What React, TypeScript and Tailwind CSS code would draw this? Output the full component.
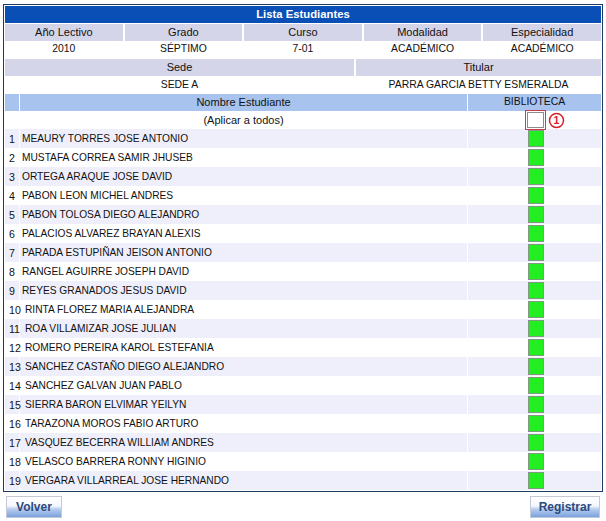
import React from 'react';

const students = [
  'MEAURY TORRES JOSE ANTONIO',
  'MUSTAFA CORREA SAMIR JHUSEB',
  'ORTEGA ARAQUE JOSE DAVID',
  'PABON LEON MICHEL ANDRES',
  'PABON TOLOSA DIEGO ALEJANDRO',
  'PALACIOS ALVAREZ BRAYAN ALEXIS',
  'PARADA ESTUPIÑAN JEISON ANTONIO',
  'RANGEL AGUIRRE JOSEPH DAVID',
  'REYES GRANADOS JESUS DAVID',
  'RINTA FLOREZ MARIA ALEJANDRA',
  'ROA VILLAMIZAR JOSE JULIAN',
  'ROMERO PEREIRA KAROL ESTEFANIA',
  'SANCHEZ CASTAÑO DIEGO ALEJANDRO',
  'SANCHEZ GALVAN JUAN PABLO',
  'SIERRA BARON ELVIMAR YEILYN',
  'TARAZONA MOROS FABIO ARTURO',
  'VASQUEZ BECERRA WILLIAM ANDRES',
  'VELASCO BARRERA RONNY HIGINIO',
  'VERGARA VILLARREAL JOSE HERNANDO',
];

const headCell = 'flex-1 h-[17px] flex items-center justify-center bg-[#d5d5e9]';
const valCell = 'flex-1 h-[17px] flex items-center justify-center bg-white text-[10.4px]';

function Button({ label, width }: { label: string; width: string }) {
  return (
    <button
      className={`${width} h-[22px] border border-[#c3cad6] bg-[linear-gradient(to_bottom,#ffffff_0%,#f4f7fc_45%,#b9cdee_60%,#7aa2de_100%)] text-[#2c4a7c] font-bold text-[12px] flex items-center justify-center`}
    >
      {label}
    </button>
  );
}

export default function App() {
  return (
    <div className="w-[606px] h-[521px] bg-white font-['Liberation_Sans',Arial,sans-serif] text-[11px] text-[#111] leading-none">
      <div className="pt-[4px] px-[3px]">
        <div className="border border-[#1d3a60] p-[1px] flex flex-col">
          {/* title */}
          <div className="h-[17px] bg-[#0a4fb6] text-white font-bold text-[11.3px] flex items-center justify-center">
            Lista Estudiantes
          </div>

          <div className="mt-[1px] flex gap-[2px]">
            <div className={headCell}>Año Lectivo</div>
            <div className={headCell}>Grado</div>
            <div className={headCell}>Curso</div>
            <div className={headCell}>Modalidad</div>
            <div className={headCell}>Especialidad</div>
          </div>
          <div className="flex gap-[2px]">
            <div className={valCell}>2010</div>
            <div className={valCell}>SÉPTIMO</div>
            <div className={valCell}>7-01</div>
            <div className={valCell}>ACADÉMICO</div>
            <div className={valCell}>ACADÉMICO</div>
          </div>

          <div className="mt-[1px] flex gap-[2px]">
            <div className="w-[349px] h-[17px] flex items-center justify-center bg-[#d5d5e9]">Sede</div>
            <div className="flex-1 h-[17px] flex items-center justify-center bg-[#d5d5e9]">Titular</div>
          </div>
          <div className="flex gap-[2px] text-[10.4px]">
            <div className="w-[349px] h-[18px] flex items-center justify-center">SEDE A</div>
            <div className="flex-1 h-[18px] flex items-center justify-center">PARRA GARCIA BETTY ESMERALDA</div>
          </div>

          {/* list header */}
          <div className="flex gap-[1px] h-[17px]">
            <div className="w-[14px] bg-[#a7c3ee]" />
            <div className="flex-1 bg-[#a7c3ee] flex items-center justify-center">Nombre Estudiante</div>
            <div className="w-[133px] bg-[#a7c3ee] flex items-center justify-center text-[10.4px]">BIBLIOTECA</div>
          </div>

          {/* apply to all */}
          <div className="flex gap-[1px] h-[18px]">
            <div className="w-[14px]" />
            <div className="flex-1 flex items-center justify-center">(Aplicar a todos)</div>
            <div className="w-[133px] relative flex items-center justify-center">
              <div className="w-[21px] h-[20px] border border-[#cf3b4e] flex items-center justify-center ml-[2px]">
                <div className="w-[17px] h-[16px] border border-[#8d8d8d] bg-white" />
              </div>
              <svg className="absolute left-[80px] top-[1px]" width="17" height="17" viewBox="0 0 17 17">
                <circle cx="8.5" cy="8.5" r="7" fill="white" stroke="#d8202a" strokeWidth="1.5" />
                <text x="8.5" y="12.3" textAnchor="middle" fontSize="10.5" fontWeight="bold" fill="#d8202a" fontFamily="Liberation Sans, Arial, sans-serif">1</text>
              </svg>
            </div>
          </div>

          {students.map((name, i) => {
            const bg = i % 2 === 0 ? 'bg-[#efeffb]' : 'bg-white';
            return (
              <div key={name} className="flex gap-[1px] h-[19px] text-[10.2px]">
                <div className={`w-[14px] ${bg} flex items-center pl-[4px] pt-[1px] whitespace-nowrap overflow-visible z-10 text-[10.6px]`}>
                  {i + 1}
                </div>
                <div className={`flex-1 ${bg} flex items-center pt-[1px] ${i >= 9 ? 'pl-[5px]' : 'pl-[2px]'}`}>{name}</div>
                <div className={`w-[133px] ${bg} flex items-center justify-center`}>
                  <div className="w-[16px] h-[17px] border border-[#7f9a7f] bg-[#22ee22] ml-[2px]" />
                </div>
              </div>
            );
          })}
        </div>
      </div>

      <div className="flex justify-between px-[6px] mt-[4px]">
        <Button label="Volver" width="w-[56px]" />
        <Button label="Registrar" width="w-[70px]" />
      </div>
    </div>
  );
}
